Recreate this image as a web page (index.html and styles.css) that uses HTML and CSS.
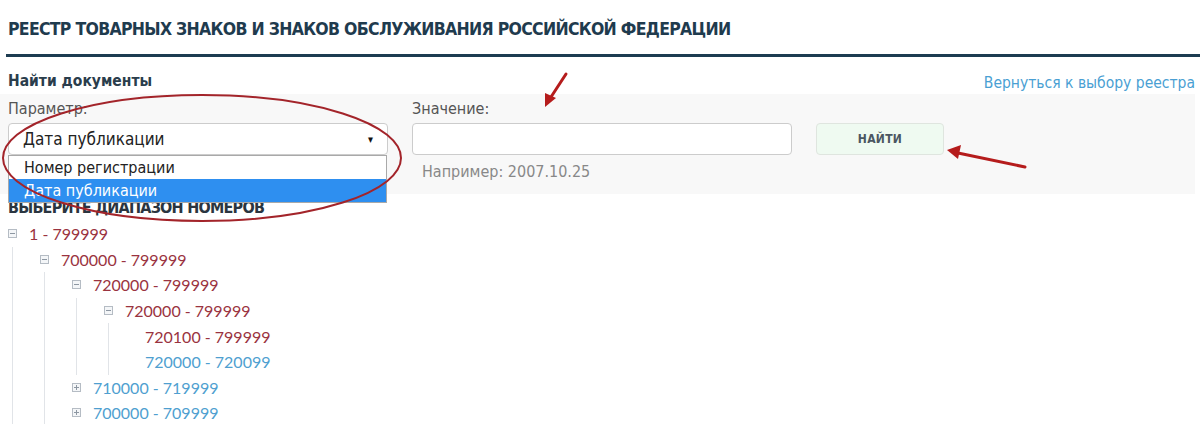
FILE: index.html
```html
<!DOCTYPE html>
<html lang="ru">
<head>
  <meta charset="UTF-8">
  <meta name="viewport" content="width=device-width, initial-scale=1.0">
  <title>Реестр товарных знаков</title>
  <link rel="stylesheet" href="styles.css">
</head>
<body>
  <div class="page">
    <h1 class="title">РЕЕСТР ТОВАРНЫХ ЗНАКОВ И ЗНАКОВ ОБСЛУЖИВАНИЯ РОССИЙСКОЙ ФЕДЕРАЦИИ</h1>
    <div class="rule"></div>

    <div class="find-head">
      <h2>Найти документы</h2>
      <a href="#" class="back">Вернуться к выбору реестра</a>
    </div>

    <div class="search-panel">
      <div class="field field-param">
        <label>Параметр:</label>
        <div class="select">
          <span>Дата публикации</span>
          <span class="caret">&#9662;</span>
          <ul class="options">
            <li>Номер регистрации</li>
            <li class="active">Дата публикации</li>
          </ul>
        </div>
      </div>
      <div class="field field-value">
        <label>Значение:</label>
        <input type="text" class="value-input">
        <div class="hint">Например: 2007.10.25</div>
      </div>
      <div class="field field-btn">
        <button class="find-btn">НАЙТИ</button>
      </div>
    </div>

    <h3 class="range-title">ВЫБЕРИТЕ ДИАПАЗОН НОМЕРОВ</h3>

    <ul class="tree">
      <li>
        <div class="node open"><i class="ico minus"></i><span>1 - 799999</span></div>
        <ul>
          <li>
            <div class="node open"><i class="ico minus"></i><span>700000 - 799999</span></div>
            <ul>
              <li>
                <div class="node open"><i class="ico minus"></i><span>720000 - 799999</span></div>
                <ul>
                  <li>
                    <div class="node open"><i class="ico minus"></i><span>720000 - 799999</span></div>
                    <ul class="leaves">
                      <li><div class="node open leaf"><span>720100 - 799999</span></div></li>
                      <li><div class="node leaf"><span>720000 - 720099</span></div></li>
                    </ul>
                  </li>
                </ul>
              </li>
              <li><div class="node"><i class="ico plus"></i><span>710000 - 719999</span></div></li>
              <li><div class="node"><i class="ico plus"></i><span>700000 - 709999</span></div></li>
            </ul>
          </li>
        </ul>
      </li>
    </ul>
  </div>

  <!-- пометки поверх скриншота -->
  <svg class="marks" width="1200" height="424" viewBox="0 0 1200 424">
    <ellipse cx="202" cy="158" rx="199" ry="63" fill="none" stroke="#a3242a" stroke-width="2"/>
    <line x1="566" y1="74" x2="551" y2="97" stroke="#b51c1c" stroke-width="3" stroke-linecap="round"/>
    <polygon points="545,107 545,93 556,98" fill="#b51c1c"/>
    <line x1="1025" y1="167" x2="958" y2="153" stroke="#b51c1c" stroke-width="3" stroke-linecap="round"/>
    <polygon points="947,150 961,145 958,159" fill="#b51c1c"/>
  </svg>
</body>
</html>
```

FILE: styles.css
```css
* { box-sizing: border-box; }
body {
  margin: 0;
  font-family: 'Liberation Sans Narrow', 'DejaVu Sans Condensed', sans-serif;
  background: #fff;
  color: #555;
  overflow: hidden;
}
.page {
  position: relative;
  width: 1200px;
}
.title {
  margin: 0;
  padding: 18px 0 0 8px;
  height: 54px;
  font-size: 17.5px;
  letter-spacing: -0.7px;
  font-weight: bold;
  color: #1f3b4e;
  line-height: 22px;
}
.rule {
  margin-left: 6px;
  height: 3px;
  background: #1d3c51;
}
.find-head {
  display: flex;
  justify-content: space-between;
  align-items: center;
  height: 37px;
  padding: 10px 5px 0 8px;
}
.find-head h2 {
  margin: 0;
  font-size: 15.5px;
  font-weight: bold;
  color: #2a3d4c;
}
.back {
  color: #4a9fd3;
  text-decoration: none;
  font-size: 15.5px;
  padding-top: 4px;
}
.search-panel {
  display: flex;
  width: 1195px;
  height: 100px;
  padding: 4px 0 0 8px;
  background: #f8f8f8;
}
.field label {
  display: block;
  font-size: 16px;
  line-height: 22px;
  color: #555;
  margin-bottom: 3px;
}
.field-param { width: 404px; }
.field-value { width: 404px; }
.field-btn { padding-top: 25px; }
.select {
  position: relative;
  width: 380px;
  height: 32px;
  padding: 0 14px;
  border: 1px solid #ccc;
  border-radius: 4px;
  background: #fff;
  display: flex;
  align-items: center;
  justify-content: space-between;
  font-size: 17px;
  color: #222;
}
.caret {
  font-size: 11px;
  color: #111;
}
.options {
  position: absolute;
  z-index: 3;
  left: -1px;
  top: 31px;
  width: 379px;
  margin: 0;
  padding: 0;
  list-style: none;
  background: #fff;
  border: 1px solid #a9a9a9;
  font-size: 16px;
}
.options li {
  height: 23px;
  line-height: 23px;
  padding-left: 15px;
  color: #222;
}
.options li.active {
  background: #2e8ff0;
  color: #fff;
}
.value-input {
  display: block;
  width: 380px;
  height: 32px;
  border: 1px solid #ccc;
  border-radius: 4px;
  background: #fff;
}
.hint {
  margin: 7px 0 0 10px;
  font-size: 16px;
  color: #888;
}
.find-btn {
  width: 128px;
  height: 32px;
  border: 1px solid #dfe5df;
  border-radius: 4px;
  background: #effaf1;
  font-family: 'Liberation Sans Narrow', 'DejaVu Sans Condensed', sans-serif;
  font-size: 12px;
  font-weight: bold;
  color: #4b5661;
  letter-spacing: 0.3px;
}
.range-title {
  margin: 0;
  padding: 0 0 0 8px;
  height: 27px;
  line-height: 27px;
  font-size: 16px;
  letter-spacing: -0.75px;
  font-weight: bold;
  color: #2a3540;
}
.tree, .tree ul {
  list-style: none;
  margin: 0;
  padding: 0;
}
.tree {
  padding-left: 8px;
}
.tree ul {
  margin-left: 4px;
  padding-left: 27px;
  border-left: 1px solid #e1e4e8;
}
.node {
  display: flex;
  align-items: center;
  height: 25.6px;
  font-family: Lato, sans-serif;
  font-size: 16px;
  color: #4f9fd0;
}
.node.open { color: #9a3340; }
.node.leaf { padding-left: 9px; }
.ico {
  position: relative;
  width: 9px;
  height: 9px;
  margin-right: 12px;
  border: 1px solid #b5bcc4;
  background: #f4f6f8;
}
.ico::before, .ico.plus::after {
  content: '';
  position: absolute;
  background: #8d97a2;
}
.ico::before {
  left: 1px; right: 1px; top: 3px; height: 1px;
}
.ico.plus::after {
  top: 1px; bottom: 1px; left: 3px; width: 1px;
}
.marks {
  position: absolute;
  left: 0;
  top: 0;
  z-index: 5;
  pointer-events: none;
}
```
